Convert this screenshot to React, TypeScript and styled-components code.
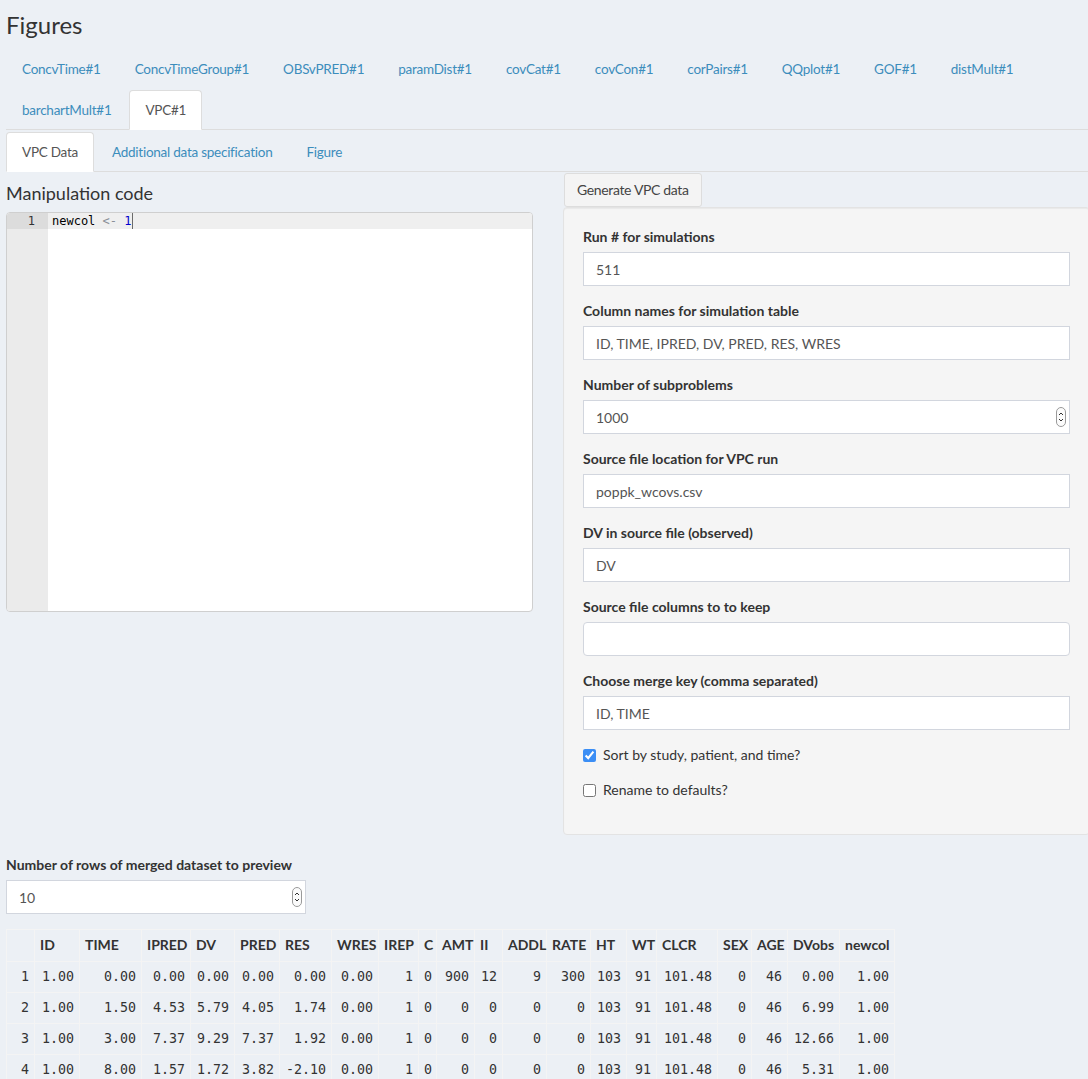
import React from "react";
import styled, { createGlobalStyle } from "styled-components";

const SANS = `"Lato", "Liberation Sans", sans-serif`;
const MONO = `"DejaVu Sans Mono", "Liberation Mono", monospace`;

const Global = createGlobalStyle`
  html, body { margin: 0; padding: 0; background: #ecf0f5; overflow-x: hidden; }
  html::-webkit-scrollbar, body::-webkit-scrollbar { display: none; }
  html { scrollbar-width: none; }
  body { font-family: ${SANS}; font-size: 14px; color: #333; line-height: 20px; }
  * { box-sizing: border-box; }
`;

const Page = styled.div`
  padding: 0 0 40px 6px;
  width: 1096px;
`;

const Title = styled.h1`
  margin: 0 0 11px 0;
  padding-top: 12px;
  font-size: 24px;
  line-height: 26px;
  font-weight: 400;
  color: #333;
`;

const TabList = styled.ul<{ $topPad?: number }>`
  list-style: none;
  margin: 0;
  padding: ${(p) => p.$topPad ?? 0}px 0 0 0;
  display: flex;
  flex-wrap: wrap;
  row-gap: 2px;
  border-bottom: 1px solid #ddd;
`;

const Tab = styled.li<{ $active?: boolean }>`
  margin: 0 2px -1px 0;
  padding: 9px 15px;
  line-height: 20px;
  font-size: 13.5px;
  letter-spacing: -0.25px;
  border: 1px solid ${(p) => (p.$active ? "#ddd" : "transparent")};
  border-bottom-color: transparent;
  border-radius: 4px 4px 0 0;
  background: ${(p) => (p.$active ? "#fff" : "transparent")};
  color: ${(p) => (p.$active ? "#555" : "#3c8dbc")};
  white-space: nowrap;
`;

const TwoCol = styled.div`
  display: grid;
  grid-template-columns: 527px 527px;
  column-gap: 30px;
  align-items: start;
`;

const LeftCol = styled.div`
  display: flex;
  flex-direction: column;
`;

const SectionLabel = styled.div`
  margin: 10px 0 8px 0;
  font-size: 18px;
  line-height: 22px;
  color: #333;
`;

const Editor = styled.div`
  display: flex;
  height: 400px;
  border: 1px solid #cfcfcf;
  border-radius: 4px;
  overflow: hidden;
  background: #fff;
  font-family: ${MONO};
  font-size: 12px;
  line-height: 16px;
`;

const Gutter = styled.div`
  width: 41px;
  background: #ebebeb;
  color: #333;
`;

const GutterCell = styled.div<{ $active?: boolean }>`
  height: 16px;
  text-align: right;
  padding-right: 13px;
  background: ${(p) => (p.$active ? "#dcdcdc" : "transparent")};
`;

const CodeArea = styled.div`
  flex: 1;
`;

const CodeLine = styled.div<{ $active?: boolean }>`
  height: 16px;
  padding-left: 4px;
  white-space: pre;
  color: #000;
  background: ${(p) => (p.$active ? "#efefef" : "transparent")};
`;

const Tok = styled.span<{ $kind: "op" | "num" }>`
  color: ${(p) => (p.$kind === "op" ? "#8a8f98" : "#0000cd")};
`;

const Cursor = styled.span`
  display: inline-block;
  width: 1px;
  height: 16px;
  vertical-align: top;
  background: #6b6b6b;
`;

const RightCol = styled.div`
  display: flex;
  flex-direction: column;
  align-items: flex-start;
`;

const ActionButton = styled.button`
  margin: 1px 0 0 1px;
  height: 34px;
  padding: 6px 12px;
  font-family: ${SANS};
  font-size: 14px;
  letter-spacing: -0.35px;
  line-height: 20px;
  color: #444;
  background: #f4f4f4;
  border: 1px solid #ddd;
  border-radius: 3px;
`;

const Well = styled.div`
  align-self: stretch;
  padding: 19px;
  background: #f5f5f5;
  border: 1px solid #e3e3e3;
  border-radius: 4px;
  box-shadow: inset 0 1px 1px rgba(0, 0, 0, 0.05);
`;

const FormGroup = styled.div<{ $width?: number }>`
  margin-bottom: 15px;
  width: ${(p) => (p.$width ? `${p.$width}px` : "auto")};
`;

const Label = styled.label`
  display: block;
  margin-bottom: 5px;
  font-weight: 700;
  line-height: 20px;
  color: #333;
`;

const InputWrap = styled.div`
  position: relative;
`;

const Input = styled.input<{ $rounded?: boolean }>`
  display: block;
  width: 100%;
  height: 34px;
  padding: 6px 12px;
  font-family: ${SANS};
  font-size: 14px;
  line-height: 20px;
  color: #555;
  background: #fff;
  border: 1px solid #d2d6de;
  border-radius: ${(p) => (p.$rounded ? "4px" : "0")};
  outline: none;
`;

const SpinnerBox = styled.span`
  position: absolute;
  right: 4px;
  top: 50%;
  transform: translateY(-50%);
  display: flex;
`;

const CheckRow = styled.label`
  display: flex;
  align-items: center;
  gap: 7px;
  min-height: 20px;
  margin-bottom: 15px;
  font-weight: 400;
  color: #333;
`;

const Check = styled.input`
  width: 13px;
  height: 13px;
  margin: 0;
  accent-color: #3b8ef5;
`;

const Bottom = styled.div`
  margin-top: 20px;
`;

const Table = styled.table`
  border-collapse: collapse;
  table-layout: fixed;
  width: 888px;
  border: 1px solid #f4f4f4;
`;

const Th = styled.th`
  padding: 5px 5px 6px 5px;
  line-height: 20px;
  text-align: left;
  font-weight: 700;
  font-size: 14px;
  color: #333;
  border: 1px solid #f4f4f4;
  white-space: nowrap;
`;

const Td = styled.td`
  padding: 5px;
  line-height: 20px;
  text-align: right;
  font-family: ${MONO};
  font-size: 13.3px;
  color: #333;
  border: 1px solid #f4f4f4;
  white-space: nowrap;
`;

const Spinner = () => (
  <SpinnerBox>
    <svg width="10" height="20" viewBox="0 0 10 20">
      <rect x="0.5" y="0.5" width="9" height="19" rx="4.5" fill="#fbfbfb" stroke="#9a9a9a" />
      <polyline points="3,8 5,6 7,8" fill="none" stroke="#333" strokeWidth="1" />
      <polyline points="3,12 5,14 7,12" fill="none" stroke="#333" strokeWidth="1" />
    </svg>
  </SpinnerBox>
);

const outerTabs = [
  "ConcvTime#1",
  "ConcvTimeGroup#1",
  "OBSvPRED#1",
  "paramDist#1",
  "covCat#1",
  "covCon#1",
  "corPairs#1",
  "QQplot#1",
  "GOF#1",
  "distMult#1",
  "barchartMult#1",
  "VPC#1",
];

const innerTabs = ["VPC Data", "Additional data specification", "Figure"];

const fields: { label: string; value: string; spinner?: boolean; rounded?: boolean }[] = [
  { label: "Run # for simulations", value: "511" },
  { label: "Column names for simulation table", value: "ID, TIME, IPRED, DV, PRED, RES, WRES" },
  { label: "Number of subproblems", value: "1000", spinner: true },
  { label: "Source file location for VPC run", value: "poppk_wcovs.csv" },
  { label: "DV in source file (observed)", value: "DV" },
  { label: "Source file columns to to keep", value: "", rounded: true },
  { label: "Choose merge key (comma separated)", value: "ID, TIME" },
];

const columns: { name: string; width: number }[] = [
  { name: "", width: 28 },
  { name: "ID", width: 45 },
  { name: "TIME", width: 62 },
  { name: "IPRED", width: 49 },
  { name: "DV", width: 44 },
  { name: "PRED", width: 45 },
  { name: "RES", width: 52 },
  { name: "WRES", width: 47 },
  { name: "IREP", width: 40 },
  { name: "C", width: 18 },
  { name: "AMT", width: 38 },
  { name: "II", width: 28 },
  { name: "ADDL", width: 44 },
  { name: "RATE", width: 44 },
  { name: "HT", width: 36 },
  { name: "WT", width: 30 },
  { name: "CLCR", width: 61 },
  { name: "SEX", width: 34 },
  { name: "AGE", width: 36 },
  { name: "DVobs", width: 52 },
  { name: "newcol", width: 55 },
];

const rows: string[][] = [
  ["1", "1.00", "0.00", "0.00", "0.00", "0.00", "0.00", "0.00", "1", "0", "900", "12", "9", "300", "103", "91", "101.48", "0", "46", "0.00", "1.00"],
  ["2", "1.00", "1.50", "4.53", "5.79", "4.05", "1.74", "0.00", "1", "0", "0", "0", "0", "0", "103", "91", "101.48", "0", "46", "6.99", "1.00"],
  ["3", "1.00", "3.00", "7.37", "9.29", "7.37", "1.92", "0.00", "1", "0", "0", "0", "0", "0", "103", "91", "101.48", "0", "46", "12.66", "1.00"],
  ["4", "1.00", "8.00", "1.57", "1.72", "3.82", "-2.10", "0.00", "1", "0", "0", "0", "0", "0", "103", "91", "101.48", "0", "46", "5.31", "1.00"],
];

export default function App() {
  return (
    <>
      <Global />
      <Page>
        <Title>Figures</Title>
        <TabList>
          {outerTabs.map((t) => (
            <Tab key={t} $active={t === "VPC#1"}>
              {t}
            </Tab>
          ))}
        </TabList>
        <TabList $topPad={2}>
          {innerTabs.map((t) => (
            <Tab key={t} $active={t === "VPC Data"}>
              {t}
            </Tab>
          ))}
        </TabList>

        <TwoCol>
          <LeftCol>
            <SectionLabel>Manipulation code</SectionLabel>
            <Editor>
              <Gutter>
                <GutterCell $active>1</GutterCell>
              </Gutter>
              <CodeArea>
                <CodeLine $active>
                  newcol <Tok $kind="op">&lt;-</Tok> <Tok $kind="num">1</Tok>
                  <Cursor />
                </CodeLine>
              </CodeArea>
            </Editor>
          </LeftCol>

          <RightCol>
            <ActionButton type="button">Generate VPC data</ActionButton>
            <Well>
              {fields.map((f) => (
                <FormGroup key={f.label}>
                  <Label>{f.label}</Label>
                  <InputWrap>
                    <Input type="text" defaultValue={f.value} $rounded={f.rounded} readOnly />
                    {f.spinner && <Spinner />}
                  </InputWrap>
                </FormGroup>
              ))}
              <CheckRow>
                <Check type="checkbox" defaultChecked />
                Sort by study, patient, and time?
              </CheckRow>
              <CheckRow>
                <Check type="checkbox" />
                Rename to defaults?
              </CheckRow>
            </Well>
          </RightCol>
        </TwoCol>

        <Bottom>
          <FormGroup $width={300}>
            <Label>Number of rows of merged dataset to preview</Label>
            <InputWrap>
              <Input type="text" defaultValue="10" readOnly />
              <Spinner />
            </InputWrap>
          </FormGroup>
          <Table>
            <colgroup>
              {columns.map((c, i) => (
                <col key={i} style={{ width: c.width }} />
              ))}
            </colgroup>
            <thead>
              <tr>
                {columns.map((c, i) => (
                  <Th key={i}>{c.name}</Th>
                ))}
              </tr>
            </thead>
            <tbody>
              {rows.map((r) => (
                <tr key={r[0]}>
                  {r.map((v, i) => (
                    <Td key={i}>{v}</Td>
                  ))}
                </tr>
              ))}
            </tbody>
          </Table>
        </Bottom>
      </Page>
    </>
  );
}
